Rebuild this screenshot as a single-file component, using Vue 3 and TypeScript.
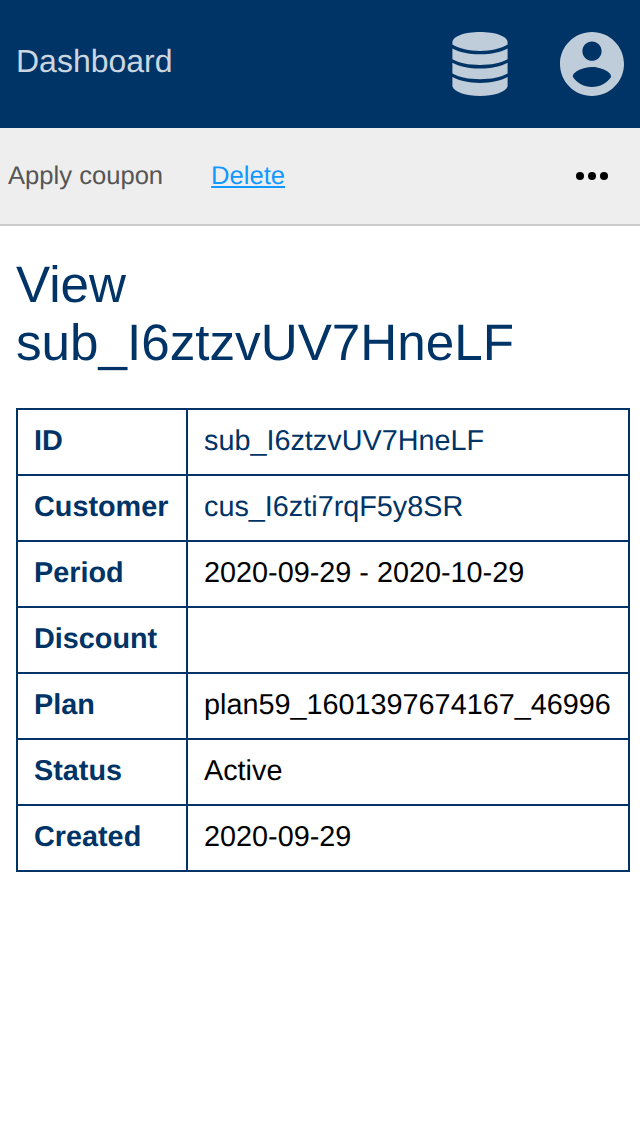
<script setup lang="ts">
interface Row {
  label: string
  value: string
  accent?: boolean
}

const subscription = 'sub_I6ztzvUV7HneLF'

const rows: Row[] = [
  { label: 'ID', value: subscription, accent: true },
  { label: 'Customer', value: 'cus_I6zti7rqF5y8SR', accent: true },
  { label: 'Period', value: '2020-09-29 - 2020-10-29' },
  { label: 'Discount', value: '' },
  { label: 'Plan', value: 'plan59_1601397674167_46996' },
  { label: 'Status', value: 'Active' },
  { label: 'Created', value: '2020-09-29' },
]
</script>

<template>
  <div class="page">
    <header class="header">
      <a class="brand">Dashboard</a>
      <div class="menus">
        <svg class="database" viewBox="0 0 56 64" aria-label="Administration">
          <path d="M0.4 10C1.2 4 13 0.1 28 0.1S54.800 4 55.600 10V12.500C49 16.600 39 18.900 28 18.900S7 16.600 0.400 12.500Z" />
          <path d="M0.4 16.500C7 20.400 17 22.300 28 22.300S49 20.400 55.600 16.500V27.200C49 31 39 32.900 28 32.900S7 31 0.400 27.200Z" />
          <path d="M0.4 30.800C7 34.700 17 36.600 28 36.600S49 34.700 55.600 30.800V41.600C49 45.400 39 47.300 28 47.300S7 45.400 0.400 41.600Z" />
          <path d="M0.4 45.100C7 49 17 50.900 28 50.900S49 49 55.600 45.100V54.500C53 60.500 42 63.900 28 63.900S3 60.500 0.400 54.500Z" />
        </svg>
        <svg class="account" viewBox="2 2 20 20" aria-label="Account">
          <path d="M12 2C6.480 2 2 6.480 2 12s4.480 10 10 10 10-4.480 10-10S17.520 2 12 2zm0 3c1.660 0 3 1.340 3 3s-1.340 3-3 3-3-1.340-3-3 1.340-3 3-3zm0 14.200c-2.500 0-4.710-1.280-6-3.220.03-1.990 4-3.080 6-3.080 1.990 0 5.970 1.090 6 3.080-1.290 1.940-3.500 3.220-6 3.220z" />
        </svg>
      </div>
    </header>

    <nav class="toolbar">
      <span class="coupon">Apply coupon</span>
      <a class="delete">Delete</a>
      <svg class="more" viewBox="0 0 32 8" aria-label="More">
        <circle cx="4" cy="4" r="4" />
        <circle cx="16" cy="4" r="4" />
        <circle cx="28" cy="4" r="4" />
      </svg>
    </nav>

    <main class="content">
      <h1>View<br />{{ subscription }}</h1>
      <table>
        <tbody>
          <tr v-for="row in rows" :key="row.label">
            <th>{{ row.label }}</th>
            <td :class="{ accent: row.accent }">{{ row.value }}</td>
          </tr>
        </tbody>
      </table>
    </main>
  </div>
</template>

<style>
body {
  margin: 0;
  background: #fff;
}
</style>

<style scoped>
.page {
  min-height: 1136px;
  overflow: hidden;
  font-family: "Liberation Sans", Arial, sans-serif;
  text-rendering: geometricPrecision;
  color: #000;
}

.header {
  display: flex;
  justify-content: space-between;
  box-sizing: border-box;
  height: 128px;
  padding: 32px 16px;
  background: #036;
}

.brand {
  font-size: 32px;
  line-height: 58px;
  color: #ccd6e0;
}

.menus {
  display: flex;
  gap: 52px;
  fill: #bfccd9;
}

.database {
  width: 56px;
  height: 64px;
}

.account {
  width: 64px;
  height: 64px;
}

.toolbar {
  display: flex;
  align-items: center;
  box-sizing: border-box;
  height: 98px;
  padding: 0 32px 0 8px;
  border-bottom: 2px solid #ccc;
  background: #eee;
  font-size: 25.6px;
  line-height: 30px;
}

.coupon {
  margin-right: 48px;
  color: #555;
}

.delete {
  color: #19f;
  text-decoration: underline;
  text-decoration-thickness: 2px;
  text-underline-offset: 2px;
}

.more {
  width: 32px;
  height: 8px;
  margin-left: auto;
}

.content {
  padding: 30px 10px 0 16px;
}

h1 {
  margin: 0 0 36px;
  font-size: 51.2px;
  font-weight: 400;
  line-height: 58px;
  color: #036;
}

table {
  width: 614px;
  border-collapse: collapse;
  table-layout: fixed;
  font-size: 28.8px;
  line-height: 32px;
}

th,
td {
  box-sizing: border-box;
  height: 66px;
  padding: 0 16px 2px;
  border: 2px solid #036;
  text-align: left;
  white-space: nowrap;
}

th {
  width: 170px;
  color: #036;
}

.accent {
  color: #036;
}
</style>
